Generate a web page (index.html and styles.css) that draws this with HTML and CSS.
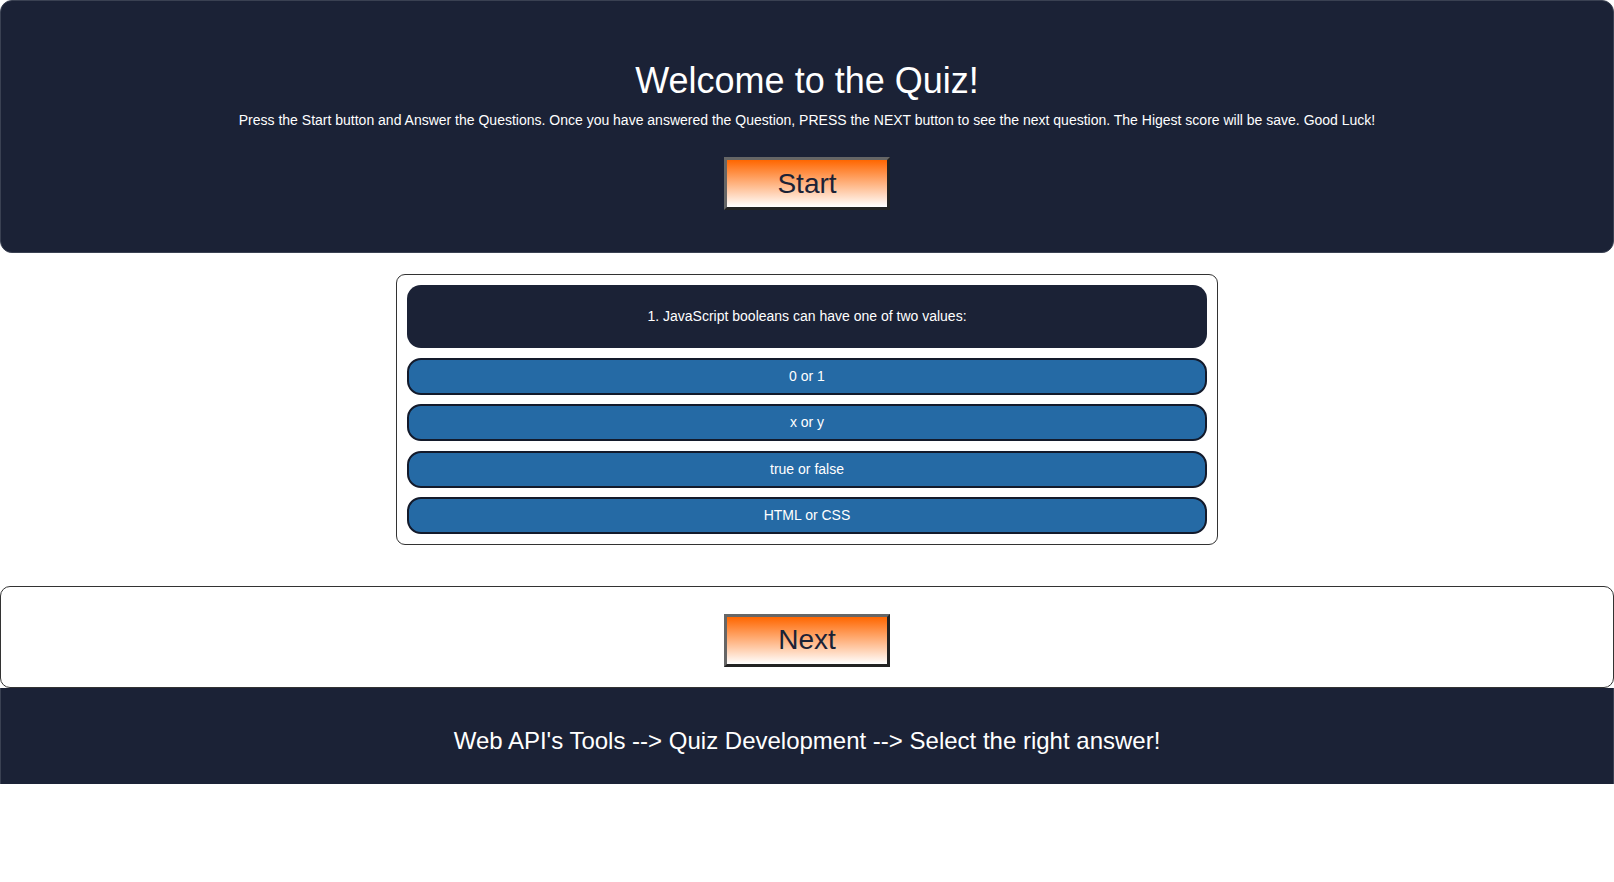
FILE: index.html
```html
<!DOCTYPE html>
<html lang="en">
<head>
<meta charset="utf-8">
<title>Quiz</title>
<link rel="stylesheet" href="styles.css">
</head>
<body>
<header class="hero">
  <h1 class="hero-title">Welcome to the Quiz!</h1>
  <p class="hero-text">Press the Start button and Answer the Questions. Once you have answered the Question, PRESS the NEXT button to see the next question. The Higest score will be save. Good Luck!</p>
  <button class="btn">Start</button>
</header>

<main class="quiz">
  <div class="question">1. JavaScript booleans can have one of two values:</div>
  <ul class="answers">
    <li class="answer">0 or 1</li>
    <li class="answer">x or y</li>
    <li class="answer">true or false</li>
    <li class="answer">HTML or CSS</li>
  </ul>
</main>

<section class="controls">
  <button class="btn">Next</button>
</section>

<footer class="footer">
  <p class="footer-text">Web API's Tools --&gt; Quiz Development --&gt; Select the right answer!</p>
</footer>
</body>
</html>
```

FILE: styles.css
```css
* { box-sizing: border-box; }

html, body {
  margin: 0;
  padding: 0;
  background: #ffffff;
}

body {
  font-family: "Liberation Sans", Arial, Helvetica, sans-serif;
  color: #1b2236;
}

.hero {
  background: #1b2236;
  border: 1px solid #3a4152;
  border-radius: 12px;
  color: #ffffff;
  text-align: center;
  padding: 59px 20px 42px;
  display: flex;
  flex-direction: column;
  align-items: center;
}

.hero-title {
  margin: 0;
  font-size: 36px;
  line-height: 42px;
  font-weight: normal;
}

.hero-text {
  margin: 9px 0 0;
  font-size: 14px;
  line-height: 18px;
}

.btn {
  width: 166px;
  height: 53px;
  font-family: "Liberation Sans", Arial, Helvetica, sans-serif;
  font-size: 28px;
  color: #1b2236;
  background: linear-gradient(to bottom, #ff6600 0%, #ffffff 100%);
  border-style: solid;
  border-width: 3px;
  border-color: #666666 #222222 #222222 #666666;
  padding: 0;
  cursor: pointer;
}

.hero .btn {
  margin-top: 28px;
}

.quiz {
  width: 822px;
  margin: 21px auto 0;
  border: 1px solid #333333;
  border-radius: 9px;
  padding: 10px;
  display: flex;
  flex-direction: column;
  gap: 10px;
}

.question {
  background: #1b2236;
  color: #ffffff;
  border-radius: 14px;
  text-align: center;
  font-size: 14px;
  line-height: 19px;
  padding: 22px 10px;
}

.answers {
  list-style: none;
  margin: 0;
  padding: 0;
  display: flex;
  flex-direction: column;
  gap: 9.33px;
}

.answer {
  background: #256aa5;
  color: #ffffff;
  border: 2px solid #131a2b;
  border-radius: 14px;
  text-align: center;
  font-size: 14px;
  line-height: 17px;
  padding: 8px 10px;
}

.controls {
  margin-top: 41px;
  border: 1px solid #333333;
  border-radius: 10px;
  padding: 27px 0 20px;
  display: flex;
  justify-content: center;
}

.footer {
  background: #1b2236;
  border-left: 1px solid #3a4152;
  border-right: 1px solid #3a4152;
  height: 96px;
  color: #ffffff;
  text-align: center;
  padding-top: 39px;
}

.footer-text {
  margin: 0;
  font-size: 24px;
  line-height: 28px;
}
```
